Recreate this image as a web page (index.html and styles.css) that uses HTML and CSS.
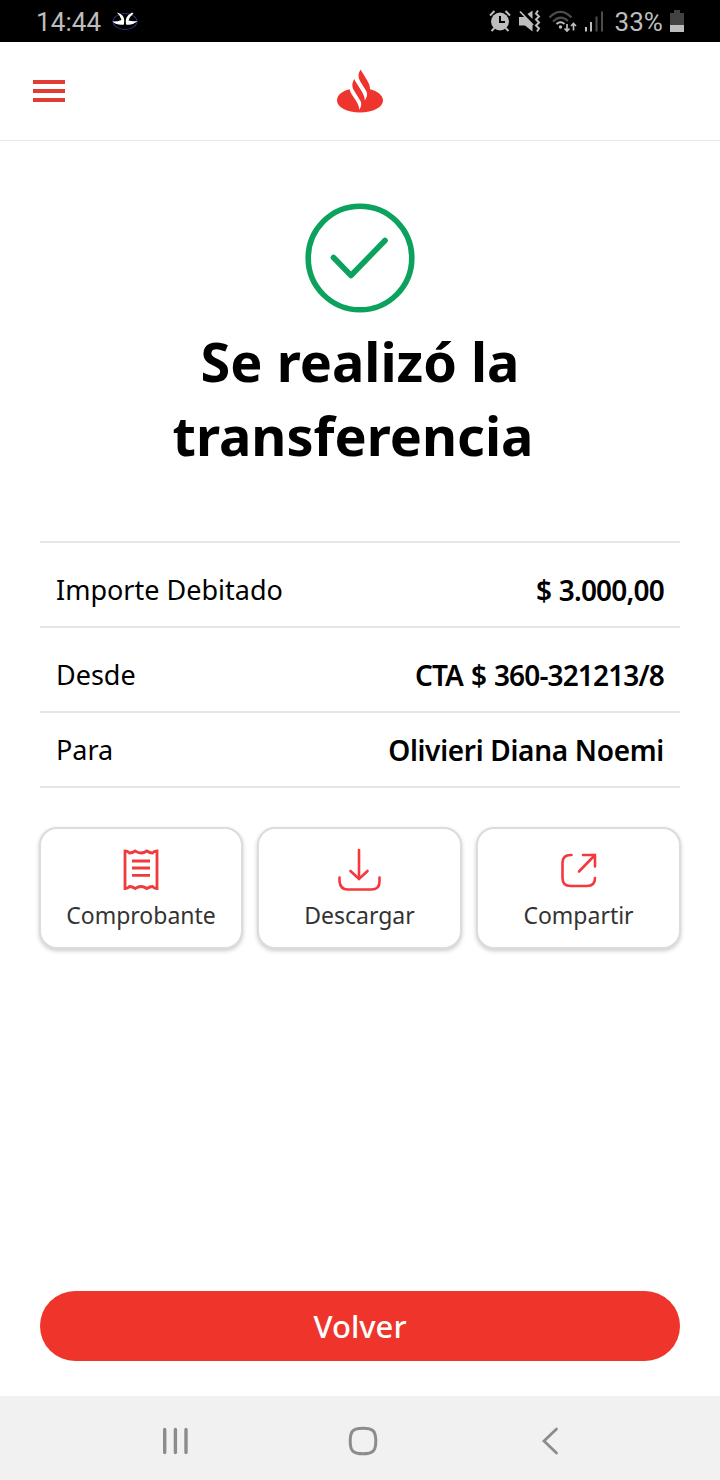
FILE: index.html
```html
<!DOCTYPE html>
<html lang="es">
<head>
<meta charset="utf-8">
<title>Se realizó la transferencia</title>
<link rel="stylesheet" href="styles.css">
</head>
<body>
<div class="status">
  <span class="clock">14:44</span>
  <svg class="notif" width="26" height="20" viewBox="0 0 26 20">
    <ellipse cx="13" cy="10.500" rx="12" ry="8" fill="none" stroke="#2b3170" stroke-width="1.100"/>
    <path d="M5 1.500Q9.500 2.500 11.500 6 12.800 9 12 13.500 5 14.500 0.500 10.500 6 10.500 9.500 9 8.500 5 5 1.500ZM20 1.500Q16 3.500 14.300 7 13.300 10 14 13.500 21 14.500 25.500 10 20 10.500 16.500 9.500 18 5 21.500 2.500Z" fill="#fff"/>
  </svg>
  <div class="status-icons">
    <svg class="alarm" width="24" height="24" viewBox="0 0 24 24">
      <circle cx="12" cy="12.500" r="9" fill="#bdbdbd"/>
      <path d="M12 7v6h5" fill="none" stroke="#000" stroke-width="2"/>
      <path d="M2 6.500 6.500 2M17.500 2 22 6.500M3.500 22l3-3M20.500 22l-3-3" fill="none" stroke="#bdbdbd" stroke-width="2"/>
    </svg>
    <svg class="mute" width="24" height="24" viewBox="0 0 24 24">
      <path d="M1 8h6l7.500 7v7.500L7 16.500H1zM9.500 5 14.500 1.500V10z" fill="#bdbdbd"/>
      <path d="M2 2.500 15 16" stroke="#bdbdbd" stroke-width="1.800"/>
      <path d="M20 1.500l-2 3 3 3-3 3 3 3-3 3 3 3-2 3" fill="none" stroke="#bdbdbd" stroke-width="2"/>
    </svg>
    <svg class="wifi" width="29" height="24" viewBox="0 0 29 24">
      <path d="M1.500 8.500Q12.500-2.500 23.500 8.500M5 12.500Q12.500 5 20 12" fill="none" stroke="#4c4c4c" stroke-width="2.200"/>
      <path d="M8.500 15Q12.500 11.500 16.500 15" fill="none" stroke="#bdbdbd" stroke-width="2"/>
      <circle cx="12.500" cy="18" r="1.700" fill="#bdbdbd"/>
      <path d="M19 15v7M16.500 19.500l2.500 2.500 2.500-2.500M25.500 21.500V15M23 17l2.500-2.500 2.500 2.500" fill="none" stroke="#bdbdbd" stroke-width="1.700"/>
    </svg>
    <svg class="signal" width="20" height="24" viewBox="0 0 20 24">
      <path d="M2 18v4.500M7 13v9.500" stroke="#bdbdbd" stroke-width="2"/>
      <path d="M12.500 7.500v15M18 2.500v20" stroke="#4c4c4c" stroke-width="2"/>
    </svg>
    <span class="percent">33%</span>
    <svg class="battery" width="14" height="22" viewBox="0 0 14 22">
      <path d="M4 0h6v3h4v12H0V3h4z" fill="#424242"/>
      <path d="M0 15h14v7H0z" fill="#bdbdbd"/>
    </svg>
  </div>
</div>

<header class="topbar">
  <div class="menu"><i></i><i></i><i></i></div>
  <svg class="flame" width="46" height="44" viewBox="0 0 46 44">
    <path d="M12.600 20.300C5 22.200 0 26.300 0 31.500 0 38.300 10 43.500 23 43.500s23-5.200 23-12C46 26.500 40.500 22 33 20.300 33 17 32 14.500 30.500 12L26 4.500Q24 1.500 23.700 0.500C21 4 20.800 8 23 12l6.500 10.500Q31.200 26 27.800 31.500C27.800 28 26.500 25.500 24.500 22L18.500 12.500Q17.700 11 17.400 10C14.500 14 15 18 17 21.500L23.500 32Q25.500 36 22.400 40.800C22 37 20.500 34 18.500 31L14.500 25Q13 22.500 12.600 20.300Z" fill="#ee342c"/>
  </svg>
</header>

<main class="content">
  <svg class="check" width="110" height="110" viewBox="0 0 110 110">
    <circle cx="55" cy="55" r="51.800" fill="none" stroke="#0aa25d" stroke-width="5.600"/>
    <path d="M28.500 54.500 46 72.500 80 37.500" fill="none" stroke="#0aa25d" stroke-width="5.600" stroke-linecap="round" stroke-linejoin="round"/>
  </svg>
  <h1 class="title">Se realizó la<br>transferencia&nbsp;</h1>
  <dl class="details">
    <div class="row"><dt>Importe Debitado</dt><dd class="amount">$ 3.000,00</dd></div>
    <div class="row"><dt>Desde</dt><dd class="account">CTA $ 360-321213/8</dd></div>
    <div class="row compact"><dt>Para</dt><dd class="name">Olivieri Diana Noemi</dd></div>
  </dl>
  <div class="actions">
    <button class="card">
      <svg width="44" height="44" viewBox="0 0 44 44" fill="none" stroke="#f03a3c" stroke-width="2.800">
        <path d="M6 4Q9 4 10.500 6 13.200 6 16.300 4 19 6 22 6 25 6 27.800 4 31 6 33.500 6 35 4 38 4V41.500Q35 41.500 33.500 39.500 31 39.500 27.800 41.500 25 39.500 22 39.500 19 39.500 16.300 41.500 13.200 39.500 10.500 39.500 9 41.500 6 41.500Z"/>
        <path d="M13 14h18M13 21h18M13 28.300h18"/>
      </svg>
      <span>Comprobante</span>
    </button>
    <button class="card">
      <svg width="44" height="44" viewBox="0 0 44 44" fill="none" stroke="#f5383e" stroke-width="2.600" stroke-linecap="round">
        <path d="M21 3v29M12.500 24l8.500 8 8.500-8M1.500 30.500v4q1 8 8 8h24q8 0 8-8v-4"/>
      </svg>
      <span>Descargar</span>
    </button>
    <button class="card">
      <svg width="44" height="44" viewBox="0 0 44 44" fill="none" stroke="#f5383e" stroke-width="2.600" stroke-linecap="round">
        <path d="M14.500 8h-1q-8 0-8 8v15q0 8 8 8h16.500q8 0 8-8M26 8H38v11.500M38 8 22 24.500"/>
      </svg>
      <span>Compartir</span>
    </button>
  </div>
  <button class="back">Volver</button>
</main>

<nav class="navbar">
  <svg class="recents" width="26" height="28" viewBox="0 0 26 28"><path d="M2.700 2.500v23M13.400 2.500v23M24 2.500v23" stroke="#8c8c8c" stroke-width="3.400" stroke-linecap="round"/></svg>
  <svg class="home" width="30" height="30" viewBox="0 0 30 30"><path d="M15 2.200c10 0 12.800 2.800 12.800 12.800S25 27.800 15 27.800 2.200 25 2.200 15 5 2.200 15 2.200z" fill="none" stroke="#8c8c8c" stroke-width="3"/></svg>
  <svg class="prev" width="18" height="28" viewBox="0 0 18 28"><path d="M15.500 2 3 14l12.500 12" fill="none" stroke="#8c8c8c" stroke-width="2.800" stroke-linecap="round"/></svg>
</nav>
</body>
</html>
```

FILE: styles.css
```css
* { box-sizing: border-box; }
body {
  margin: 0;
  width: 720px;
  height: 1480px;
  display: flex;
  flex-direction: column;
  background: #fff;
  color: #000;
  font-family: "Noto Sans", sans-serif;
  overflow: hidden;
}
svg { display: block; flex: none; }
button { font-family: inherit; cursor: pointer; }

.status {
  height: 42px;
  flex: none;
  display: flex;
  align-items: center;
  padding: 0 36px;
  background: #000;
  color: #bdbdbd;
  font: 26px/42px Roboto, sans-serif;
}
.clock { padding-top: 2px; letter-spacing: 0.1px; }
.notif { margin-left: 11px; }
.status-icons { margin-left: auto; display: flex; align-items: center; }
.alarm { margin-right: -1px; }
.mute { margin-left: 7px; }
.wifi { margin-left: 6px; }
.signal { margin-left: 7px; }
.percent { margin-left: 10px; padding-top: 2px; letter-spacing: 0.1px; }
.battery { margin-left: 7px; }

.topbar {
  height: 99px;
  flex: none;
  display: grid;
  grid-template-columns: 1fr 46px 1fr;
  align-items: center;
  padding: 0 33px;
  border-bottom: 1px solid #e8e8e8;
}
.flame { margin-bottom: 1px; }
.menu { display: flex; flex-direction: column; gap: 5px; width: 32px; }
.menu i { height: 4px; background: #e23b34; }

.content {
  height: 1255px;
  display: flex;
  flex-direction: column;
  align-items: center;
  padding: 62px 40px 35px;
}
.title {
  margin: 11px 0 0;
  font-size: 54px;
  line-height: 74px;
  font-weight: 700;
  text-align: center;
}
.details { margin: 69px 0 0; width: 100%; border-top: 2px solid #e6e6e6; }
.row {
  height: 85px;
  display: flex;
  justify-content: space-between;
  align-items: flex-end;
  padding: 0 16px 17px;
  border-bottom: 2px solid #e6e6e6;
  font-size: 27px;
  line-height: 38px;
}
.compact { height: 75px; }
dd { margin: 0; font-size: 28px; font-weight: 600; }
.amount { letter-spacing: -0.8px; word-spacing: 1px; }
.account { letter-spacing: -0.85px; word-spacing: 1.4px; }
.name { letter-spacing: -0.3px; }

.actions {
  width: 642px;
  margin-top: 39px;
  display: grid;
  grid-template-columns: 204px 205px 205px;
  gap: 14px;
}
.card {
  height: 122px;
  display: flex;
  flex-direction: column;
  align-items: center;
  padding: 18px 0 0;
  background: #fff;
  border: 2px solid #dcdcdc;
  border-radius: 18px;
  box-shadow: 0 2px 4px rgba(0, 0, 0, .2);
  color: #333;
  font-size: 23px;
  line-height: 32px;
}
.card span { margin-top: 8px; }

.back {
  width: 100%;
  height: 70px;
  margin-top: auto;
  border: 0;
  border-radius: 35px;
  background: #ee342b;
  color: #fff;
  font-size: 31px;
  font-weight: 500;
}

.navbar {
  height: 84px;
  flex: none;
  display: grid;
  grid-template-columns: 186px 195px 18px;
  align-items: center;
  padding: 5px 0 0 162px;
  background: #f1f1f1;
}
.prev { margin-left: -2px; }
```
